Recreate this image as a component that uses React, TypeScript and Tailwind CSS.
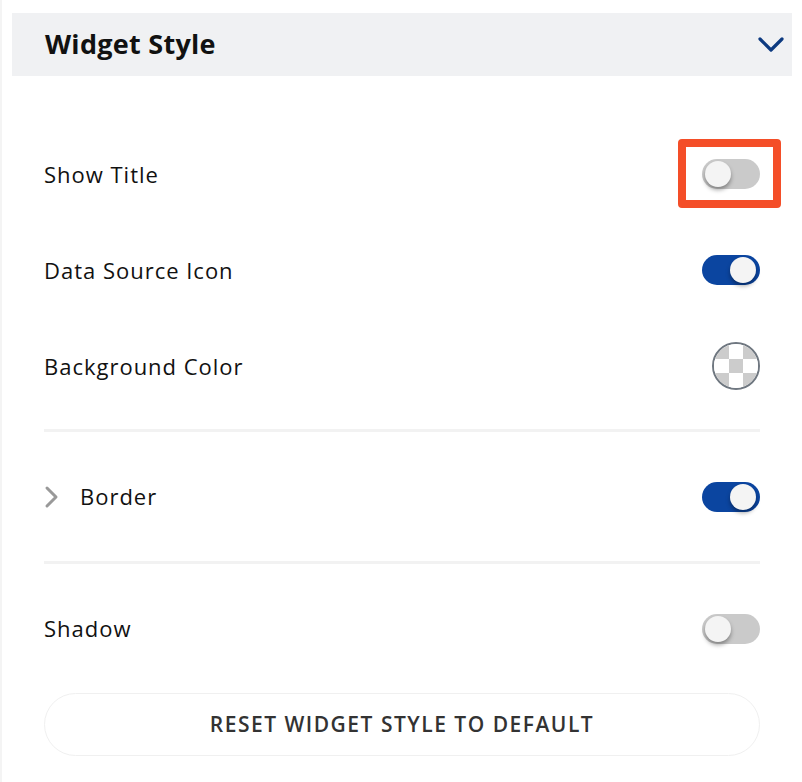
import React from "react";

function Toggle({ on }: { on: boolean }) {
  return (
    <div
      className={`relative h-[30px] w-[58px] rounded-full ${on ? "bg-[#0b45a0]" : "bg-[#cacaca]"}`}
    >
      <div
        className={`absolute top-[2px] h-[26px] w-[26px] rounded-full bg-[#f4f4f4] shadow-[0_3px_4px_rgba(0,0,0,0.35)] ${on ? "right-[4px]" : "left-[3px]"}`}
      />
    </div>
  );
}

function ColorSwatch() {
  const cells = [1, 0, 1, 0, 1, 0, 1, 0, 1];
  return (
    <div className="h-[48px] w-[48px] overflow-hidden rounded-full border-2 border-[#6f7780]">
      <div className="grid h-full w-full grid-cols-3 grid-rows-3">
        {cells.map((c, i) => (
          <div key={i} className={c ? "bg-[#cccccc]" : "bg-white"} />
        ))}
      </div>
    </div>
  );
}

function Row({ label, children }: { label: React.ReactNode; children: React.ReactNode }) {
  return (
    <div className="flex h-[96px] items-center justify-between">
      <span className="text-[22px] tracking-[0.045em] text-[#111]">{label}</span>
      {children}
    </div>
  );
}

export default function App() {
  return (
    <div
      className="min-h-[782px] w-[802px] border-l-2 border-[#f4f4f4] bg-white pl-[10px] pr-[10px] pt-[13px]"
      style={{ fontFamily: '"Open Sans", "Noto Sans", sans-serif' }}
    >
      {/* Header */}
      <div className="flex h-[63px] items-center justify-between bg-[#f0f1f3] pl-[33px] pr-[8px]">
        <h2 className="text-[27px] font-bold tracking-[0.01em] text-[#111]">Widget Style</h2>
        <svg width="26" height="16" viewBox="0 0 26 16" fill="none">
          <path d="M2 2l11 11L24 2" stroke="#0d3a80" strokeWidth="3.2" strokeLinecap="round" strokeLinejoin="round" />
        </svg>
      </div>

      <div className="px-[32px] pt-[50px]">
        <Row label="Show Title">
          <div className="relative">
            <Toggle on={false} />
            <div className="absolute -bottom-[19px] -left-[24px] -right-[21px] -top-[20px] rounded-[4px] border-[8px] border-[#f44e28]" />
          </div>
        </Row>
        <Row label="Data Source Icon">
          <Toggle on={true} />
        </Row>
        <Row label="Background Color">
          <ColorSwatch />
        </Row>

        <div className="mt-[15px] h-[3px] bg-[#f2f2f2]" />

        <div className="flex h-[129px] items-center justify-between">
          <div className="flex items-center">
            <svg width="16" height="24" viewBox="0 0 16 24" fill="none" className="mr-[20px]">
              <path d="M3 3l9 9-9 9" stroke="#999999" strokeWidth="3" strokeLinecap="round" strokeLinejoin="round" />
            </svg>
            <span className="text-[22px] tracking-[0.045em] text-[#111]">Border</span>
          </div>
          <Toggle on={true} />
        </div>

        <div className="h-[3px] bg-[#f2f2f2]" />

        <div className="flex h-[129px] items-center justify-between">
          <span className="text-[22px] tracking-[0.045em] text-[#111]">Shadow</span>
          <Toggle on={false} />
        </div>

        <button className="flex h-[63px] w-full items-center justify-center rounded-full border border-[#f0f0f0] bg-white text-[21px] font-semibold uppercase tracking-[1.5px] text-[#333]">
          Reset Widget Style to Default
        </button>
      </div>
    </div>
  );
}
